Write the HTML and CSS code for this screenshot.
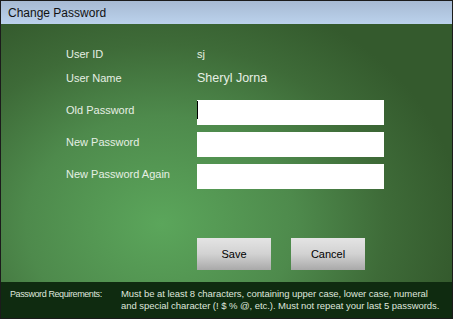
FILE: index.html
```html
<!DOCTYPE html>
<html lang="en">
<head>
    <meta charset="UTF-8">
    <title>Change Password</title>
    <link rel="stylesheet" href="styles.css">
</head>
<body>
    <div class="window">
        <div class="title-bar">Change Password</div>
        <div class="main">
            <div class="info-row">
                <div class="label">User ID</div>
                <div class="value">sj</div>
            </div>
            <div class="info-row">
                <div class="label">User Name</div>
                <div class="value name">Sheryl Jorna</div>
            </div>
            <div class="fields">
                <div class="field-row">
                    <div class="label">Old Password</div>
                    <div class="field"><span class="caret"></span></div>
                </div>
                <div class="field-row">
                    <div class="label">New Password</div>
                    <div class="field"></div>
                </div>
                <div class="field-row">
                    <div class="label">New Password Again</div>
                    <div class="field"></div>
                </div>
            </div>
            <div class="buttons">
                <button class="btn">Save</button>
                <button class="btn">Cancel</button>
            </div>
        </div>
        <div class="footer">
            <div class="req-title">Password Requirements:</div>
            <div class="req-text">Must be at least 8 characters, containing upper case, lower case, numeral<br>and special character (! $ % @, etc.). Must not repeat your last 5 passwords.</div>
        </div>
    </div>
</body>
</html>
```
FILE: styles.css
```css
body {
    margin: 0;
    font-family: "Liberation Sans", Arial, sans-serif;
}
.window {
    width: 451px;
    height: 317px;
    border: 1px solid #1b1b1b;
    display: flex;
    flex-direction: column;
    overflow: hidden;
}
.title-bar {
    height: 23px;
    background: linear-gradient(to bottom, #a7bad3, #bbd2ec);
    color: #111;
    font-size: 12px;
    line-height: 24px;
    padding-left: 7px;
}
.main {
    height: 258px;
    background: radial-gradient(ellipse 300px 240px at 160px 200px, #5ba65b 0%, #4e8a4c 45%, #3e6b38 75%, #345a2d 100%);
    display: flex;
    flex-direction: column;
    padding-top: 18px;
    box-sizing: border-box;
    color: #e6efe4;
    font-size: 11px;
}
.info-row, .field-row {
    display: flex;
    padding-left: 65px;
}
.info-row {
    height: 24px;
    line-height: 24px;
}
.label {
    width: 131px;
}
.value.name {
    font-size: 12.5px;
}
.fields {
    display: flex;
    flex-direction: column;
    gap: 7px;
    margin-top: 10px;
}
.field-row {
    height: 25px;
    line-height: 21px;
}
.field {
    width: 187px;
    background: #fff;
    position: relative;
}
.caret {
    position: absolute;
    left: 0;
    top: 1px;
    width: 1px;
    height: 18px;
    background: #000;
}
.buttons {
    display: flex;
    gap: 20px;
    padding: 49px 0 0 196px;
}
.btn {
    width: 74px;
    height: 32px;
    border: none;
    padding: 0;
    background: linear-gradient(to bottom, #e4e4e4, #d2d2d2 50%, #a9a9a9);
    color: #000;
    font-family: "Liberation Sans", Arial, sans-serif;
    font-size: 11px;
}
.footer {
    flex: 1;
    background: #0f2b10;
    color: #dfe6dc;
    font-size: 9.5px;
    line-height: 12px;
    display: flex;
    padding: 6px 0 0 9px;
    white-space: nowrap;
}
.req-title {
    width: 111px;
    flex: none;
    font-size: 9px;
    letter-spacing: -0.4px;
}
.req-text {
    letter-spacing: -0.05px;
}
```
